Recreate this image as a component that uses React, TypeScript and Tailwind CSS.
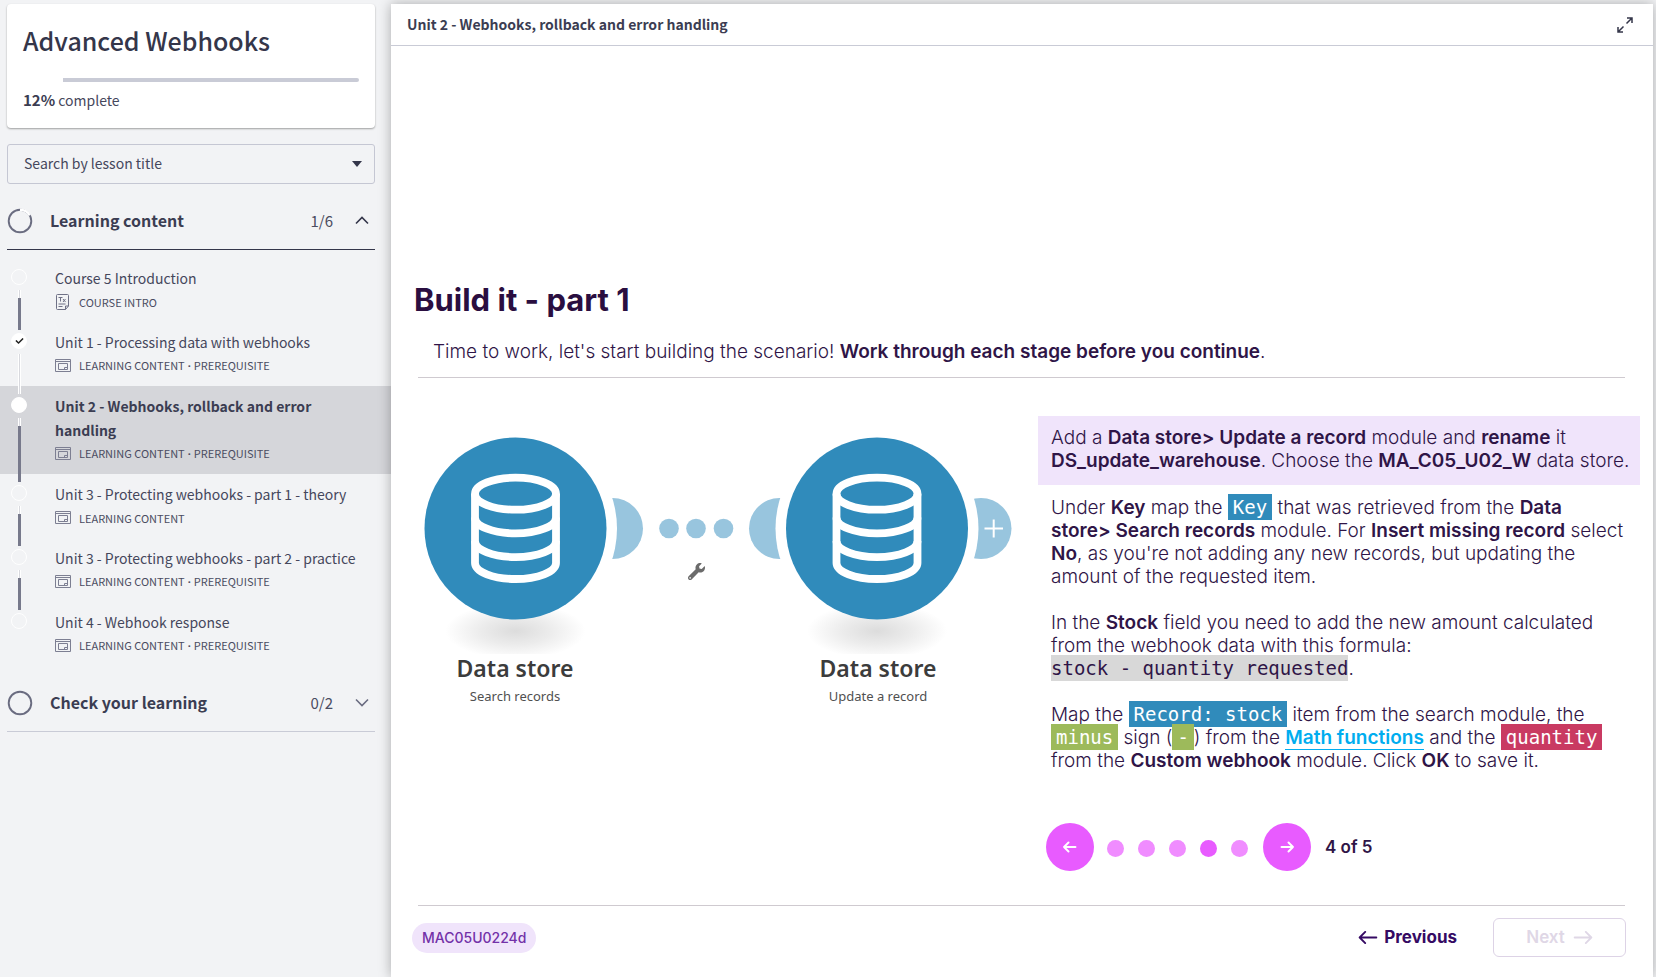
import React from "react";
import { FaWrench, FaCheck } from "react-icons/fa";

type Lesson = {
  title: string;
  tags: string[];
  state: "open" | "done" | "current";
  doc?: boolean;
};

const lessons: Lesson[] = [
  { title: "Course 5 Introduction", tags: ["COURSE INTRO"], state: "open", doc: true },
  { title: "Unit 1 - Processing data with webhooks", tags: ["LEARNING CONTENT", "PREREQUISITE"], state: "done" },
  { title: "Unit 2 - Webhooks, rollback and error handling", tags: ["LEARNING CONTENT", "PREREQUISITE"], state: "current" },
  { title: "Unit 3 - Protecting webhooks - part 1 - theory", tags: ["LEARNING CONTENT"], state: "open" },
  { title: "Unit 3 - Protecting webhooks - part 2 - practice", tags: ["LEARNING CONTENT", "PREREQUISITE"], state: "open" },
  { title: "Unit 4 - Webhook response", tags: ["LEARNING CONTENT", "PREREQUISITE"], state: "open" },
];

function DocIcon() {
  return (
    <svg viewBox="0 0 16 16" className="h-4 w-4" fill="none" stroke="#6f7186" strokeWidth="1">
      <path d="M10.500 15.500h-8a1 1 0 0 1-1-1v-13a1 1 0 0 1 1-1h10a1 1 0 0 1 1 1v10.500l-3 3.500v-3.500h3" />
      <path d="M3.500 3.500h4M5.500 3.500v4M8 5l2.500 3M10.500 5l-2.500 3M3.500 10h7M3.500 12.500h4" />
    </svg>
  );
}

function SlideIcon() {
  return (
    <svg viewBox="0 0 16 13" className="h-[13px] w-4" fill="none" stroke="#7d7f92" strokeWidth="1">
      <path d="M.5.5h15v12H.5zM.5 2.500h15M3.500 4.500h9v6h-9zM12.500 8.500h-3v2" />
    </svg>
  );
}

function Chevron({ up }: { up?: boolean }) {
  return (
    <svg viewBox="0 0 14 9" className="h-[9px] w-[14px]" fill="none" stroke={up ? "#34364a" : "#6a6c80"} strokeWidth="1.600">
      <path d={up ? "M1 7.500L7 1.500l6 6" : "M1 1.500l6 6 6-6"} />
    </svg>
  );
}

function SectionHeader({ title, count, open }: { title: string; count: string; open?: boolean }) {
  return (
    <h2 className="mx-[7px]">
      <button
        type="button"
        aria-expanded={!!open}
        className={`flex h-[58px] w-full items-center border-b text-left ${open ? "border-[#34364a]" : "border-[#c9cbd6]"}`}
      >
        <svg viewBox="0 0 26 26" className="h-[26px] w-[26px]" fill="none" strokeWidth="1.900">
          <circle cx="13" cy="13" r="11.300" stroke="#6a6c80" />
          {open && <path d="M13 1.700A11.300 11.300 0 0 1 22.800 7.300" stroke="#ffffff" strokeWidth="2.400" />}
        </svg>
        <span className="ml-[17px] grow pb-0.5 text-[16px] leading-6 font-bold text-[#3b3d52]">{title}</span>
        <span className="text-[15px] leading-6 text-[#4a4c61]">{count}</span>
        <span className="mr-1.5 ml-[22px]">
          <Chevron up={open} />
        </span>
      </button>
    </h2>
  );
}

function LessonRow({ lesson, last }: { lesson: Lesson; last: boolean }) {
  const current = lesson.state === "current";
  return (
    <li>
      <a
        href="#"
        aria-current={current ? "page" : undefined}
        className={`flex pr-5 pl-[11px] ${current ? "bg-[#d5d6da]" : ""}`}
      >
        <span className="flex w-4 shrink-0 flex-col items-center pt-[11px]">
          <span
            className={`flex h-4 w-4 items-center justify-center rounded-full border border-white ${
              lesson.state === "open" ? "" : "bg-white"
            }`}
          >
            {lesson.state === "done" && <FaCheck className="h-2 w-[9px] text-[#222]" />}
          </span>
          {!last && (
            <span className="relative z-10 mt-[5px] -mb-2 flex w-[3px] grow flex-col">
              <span className="h-2 border-x border-white bg-[#d8d9de]" />
              <span className={lesson.state === "done" ? "grow border-x border-white bg-[#d8d9de]" : "grow bg-[#77798b]"} />
            </span>
          )}
        </span>
        <span className="ml-7 flex flex-col pt-2 pb-[9px]">
          <span className={`text-[14px] leading-6 ${current ? "max-w-[280px] font-bold text-[#3b3d52]" : "text-[#45475c]"}`}>
            {lesson.title}
          </span>
          <span className="flex h-[23px] items-center gap-2 text-[11px] leading-4 text-[#4a4c61]">
            {lesson.doc ? <DocIcon /> : <SlideIcon />}
            <span>
              {lesson.tags[0]}
              {lesson.tags[1] && (
                <>
                  <span className="mx-[3px] font-['Noto_Sans',sans-serif] font-bold">·</span>
                  {lesson.tags[1]}
                </>
              )}
            </span>
          </span>
        </span>
      </a>
    </li>
  );
}

function Sidebar() {
  return (
    <aside className="w-[391px] shrink-0 pt-1 pb-6 font-['Noto_Sans_CJK_SC',sans-serif]">
      <div className="mr-4 ml-[7px] h-[124px] rounded bg-white px-4 shadow-[0_1px_2px_rgba(0,0,0,0.35)]">
        <h1 className="pt-[14px] text-[25px] leading-[44px] font-medium text-[#34364a]">Advanced Webhooks</h1>
        <div role="progressbar" aria-valuenow={12} aria-label="Course progress" className="mt-4 h-1 rounded-full bg-[#c9cbd6]">
          <div className="h-1 w-[12%] bg-white" />
        </div>
        <p className="mt-1.5 text-[14px] leading-6 text-[#45475c]">
          <b className="text-[15px] font-bold text-[#3b3d52]">12%</b> complete
        </p>
      </div>
      <div className="mt-4 mr-4 ml-[7px] grid items-center">
        <select
          aria-label="Search by lesson title"
          className="col-start-1 row-start-1 h-10 w-full appearance-none rounded-[3px] border border-[#c5c7d3] bg-transparent px-4 pb-0.5 text-[14px] text-[#45475c]"
        >
          <option>Search by lesson title</option>
        </select>
        <svg viewBox="0 0 10 6" className="pointer-events-none col-start-1 row-start-1 mr-[13px] h-1.5 w-2.5 justify-self-end" fill="#34364a">
          <path d="M0 0h10L5 6z" />
        </svg>
      </div>
      <div className="mt-2 mr-[9px]">
        <SectionHeader title="Learning content" count="1/6" open />
      </div>
      <ol className="mt-2">
        {lessons.map((l, i) => (
          <LessonRow key={l.title} lesson={l} last={i === lessons.length - 1} />
        ))}
      </ol>
      <div className="mt-2 mr-[9px]">
        <SectionHeader title="Check your learning" count="0/2" />
      </div>
    </aside>
  );
}

function DataNode({ cx }: { cx: number }) {
  return (
    <>
      <ellipse cx={cx} cy="197" rx="70" ry="28" fill="url(#floor)" />
      <circle cx={cx} cy="94.500" r="101.500" fill="#fff" clipPath="url(#band)" />
      <circle cx={cx} cy="94.500" r="91" fill="#308bbb" />
      <g transform={`translate(${cx} 0)`} fill="none" stroke="#fff" strokeWidth="7.800">
        <ellipse cx="0" cy="59.700" rx="40.500" ry="16" />
        <path d="M-40.500 59.700V129a40.500 16 0 0 0 81 0V59.700" />
        <path d="M-40.500 83.400a40.500 16 0 0 0 81 0M-40.500 107.100a40.500 16 0 0 0 81 0" />
      </g>
    </>
  );
}

function Diagram() {
  return (
    <figure className="pt-[18px] pl-1.5">
      <div className="w-full max-w-[588px]">
        <svg viewBox="0 0 588 220" className="w-full" role="img" aria-label="Search records connected to Update a record">
          <defs>
            <radialGradient id="floor">
              <stop offset="0" stopColor="#dcdcdc" />
              <stop offset="0.500" stopColor="#ececec" />
              <stop offset="1" stopColor="#ffffff" />
            </radialGradient>
            <clipPath id="band">
              <rect x="0" y="60" width="588" height="70" />
            </clipPath>
          </defs>
          <g fill="#98c5de">
            <circle cx="188.500" cy="94.500" r="30.500" />
            <circle cx="355.500" cy="94.500" r="30.500" />
            <circle cx="557" cy="94.500" r="30.500" />
            <circle cx="245" cy="94.500" r="9.800" />
            <circle cx="272" cy="94.500" r="9.800" />
            <circle cx="299.500" cy="94.500" r="9.800" />
          </g>
          <DataNode cx={91.5} />
          <DataNode cx={453} />
          <path d="M560.500 94.500h18.500M569.700 85.500v18" stroke="#fff" strokeWidth="2" />
          <FaWrench x={264} y={129} size={17} color="#6b6b6b" />
        </svg>
        <figcaption className="flex justify-between pr-[43px] text-center font-['Noto_Sans',sans-serif] text-[#3c3c3c]">
          <div className="w-[182px]">
            <p className="text-[23px] leading-7 font-semibold">Data store</p>
            <p className="mt-0.5 text-[13px] leading-6 text-[#505050]">Search records</p>
          </div>
          <div className="w-[182px]">
            <p className="text-[23px] leading-7 font-semibold">Data store</p>
            <p className="mt-0.5 text-[13px] leading-6 text-[#505050]">Update a record</p>
          </div>
        </figcaption>
      </div>
    </figure>
  );
}

const mono = "py-0.5 font-['DejaVu_Sans_Mono',monospace] text-[19px] leading-none";

function B({ children }: { children: React.ReactNode }) {
  return <b className="font-semibold">{children}</b>;
}

function Tag({ tone, children }: { tone: "blue" | "green" | "red"; children: React.ReactNode }) {
  const bg = { blue: "bg-[#308bbb]", green: "bg-[#9dba5b]", red: "bg-[#c93a62]" }[tone];
  return <code className={`px-[5px] text-white ${mono} ${bg}`}>{children}</code>;
}

function Arrow({ left, className }: { left?: boolean; className: string }) {
  return (
    <svg viewBox="0 0 20 14" className={className} fill="none" stroke="currentColor" strokeWidth="2" strokeLinecap="round" strokeLinejoin="round">
      <path d={left ? "M7 1L1 7l6 6M1 7h18" : "M13 1l6 6-6 6M19 7H1"} />
    </svg>
  );
}

function SmallArrow({ left }: { left?: boolean }) {
  return (
    <svg viewBox="0 0 14 12" className="h-3 w-3.5" fill="none" stroke="currentColor" strokeWidth="1.900" strokeLinecap="round" strokeLinejoin="round">
      <path d={left ? "M5.500 1.500L1 6l4.500 4.500M1 6h11.500" : "M8.500 1.500L13 6l-4.500 4.500M13 6H1.500"} />
    </svg>
  );
}

function Steps() {
  return (
    <div className="text-[19px] leading-[23px] font-light text-[#2f1547]">
      <p className="bg-[#f0e4fb] pt-[10px] pb-[13px] pl-[13px]">
        Add a <B>Data store&gt; Update a record</B> module and <B>rename</B> it
        <br />
        <B>DS_update_warehouse</B>. Choose the <B>MA_C05_U02_W</B> data store.
      </p>
      <div className="flex flex-col gap-[23px] pt-[11px] pr-3 pl-[13px]">
        <p>
          Under <B>Key</B> map the <Tag tone="blue">Key</Tag> that was retrieved from the <B>Data<br />
          store&gt; Search records</B> module. For <B>Insert missing record</B> select
          <br />
          <B>No</B>, as you're not adding any new records, but updating the
          <br />
          amount of the requested item.
        </p>
        <p>
          In the <B>Stock</B> field you need to add the new amount calculated
          <br />
          from the webhook data with this formula:
          <br />
          <code className={`bg-[#d8d8d8] ${mono}`}>stock - quantity requested</code>.
        </p>
        <p>
          Map the <Tag tone="blue">Record: stock</Tag> item from the search module, the
          <br />
          <Tag tone="green">minus</Tag> sign (<Tag tone="green">-</Tag>) from the{" "}
          <a href="#" className="border-b border-[#00adef] font-semibold text-[#00adef]">Math functions</a> and the{" "}
          <Tag tone="red">quantity</Tag>
          <br />
          from the <B>Custom webhook</B> module. Click <B>OK</B> to save it.
        </p>
      </div>
      <nav aria-label="Steps" className="mt-[51px] ml-2 flex items-center">
        <button type="button" aria-label="Previous step" className="flex h-12 w-12 items-center justify-center rounded-full bg-[#e85bff] text-white">
          <SmallArrow left />
        </button>
        <span className="mr-[15px] ml-[13px] flex gap-[14px] pt-0.5">
          {[1, 2, 3, 4, 5].map((n) => (
            <button
              key={n}
              type="button"
              aria-label={`Step ${n}`}
              className={`h-[17px] w-[17px] rounded-full ${n === 4 ? "bg-[#e85bff]" : "bg-[#f08cff]"}`}
            />
          ))}
        </span>
        <button type="button" aria-label="Next step" className="flex h-12 w-12 items-center justify-center rounded-full bg-[#e85bff] text-white">
          <SmallArrow />
        </button>
        <span className="ml-[14px] text-[17px] font-semibold">4 of 5</span>
      </nav>
    </div>
  );
}

export default function App() {
  return (
    <div className="flex min-h-screen bg-[#f2f3f5]">
      <Sidebar />
      <main className="mt-1 mr-[3px] flex min-w-0 grow flex-col bg-white shadow-[0_0_12px_rgba(0,0,0,0.3)]">
        <header className="flex h-[42px] items-center justify-between border-b border-[#c9cbd6] pr-5 pl-4">
          <h2 className="font-['Noto_Sans_CJK_SC',sans-serif] text-[14px] font-bold text-[#3b3d52]">
            Unit 2 - Webhooks, rollback and error handling
          </h2>
          <button type="button" aria-label="Expand">
            <svg viewBox="0 0 16 16" className="h-4 w-4" fill="none" stroke="#34364a" strokeWidth="1.500">
              <path d="M10 1h5v5M15 1L9.500 6.500M6 15H1v-5M1 15l5.500-5.500" />
            </svg>
          </button>
        </header>
        <article className="flex grow flex-col pt-[234px] pl-[27px] font-['Inter',sans-serif]">
          <h1 className="-ml-1 text-[31px] leading-10 font-bold text-[#2a0e40]">Build it - part 1</h1>
          <p className="mt-5 ml-[15px] text-[19px] leading-6 font-light text-[#2f1547]">
            Time to work, let's start building the scenario! <B>Work through each stage before you continue</B>.
          </p>
          <hr className="mt-[13px] mr-7 border-[#cfcad0]" />
          <div className="mt-[38px] mr-[13px] grid grid-cols-[620fr_602fr]">
            <Diagram />
            <Steps />
          </div>
          <hr className="mt-[34px] mr-7 border-[#cfcad0]" />
          <footer className="mt-3 mr-[27px] -ml-1.5 flex items-center justify-between pb-5">
            <span className="rounded-full bg-[#f0e4fb] px-2.5 text-[14px] leading-[30px] font-medium text-[#7331a8]">MAC05U0224d</span>
            <div className="flex items-center gap-9">
              <button type="button" className="flex items-center gap-1.5 text-[17px] font-bold text-[#350a63]">
                <Arrow left className="h-[13px] w-5" />
                Previous
              </button>
              <button
                type="button"
                disabled
                className="flex h-[39px] w-[133px] items-center justify-center gap-2 rounded-md border border-[#ddd3e6] text-[17px] font-semibold text-[#dfd7e6]"
              >
                Next
                <Arrow className="h-[13px] w-5" />
              </button>
            </div>
          </footer>
        </article>
      </main>
    </div>
  );
}
